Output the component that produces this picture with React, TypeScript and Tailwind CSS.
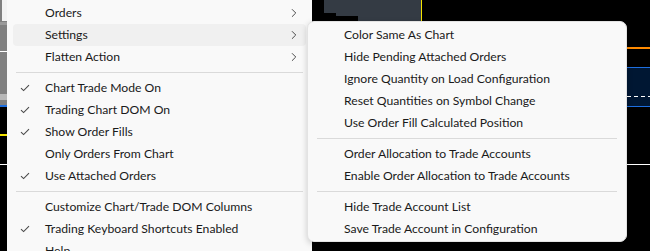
import { ChevronRight } from "lucide-react";

type Item =
  | { kind: "item"; label: string; checked?: boolean; sub?: boolean; active?: boolean }
  | { kind: "sep" };

const mainItems: Item[] = [
  { kind: "item", label: "Orders", sub: true },
  { kind: "item", label: "Settings", sub: true, active: true },
  { kind: "item", label: "Flatten Action", sub: true },
  { kind: "sep" },
  { kind: "item", label: "Chart Trade Mode On", checked: true },
  { kind: "item", label: "Trading Chart DOM On", checked: true },
  { kind: "item", label: "Show Order Fills", checked: true },
  { kind: "item", label: "Only Orders From Chart" },
  { kind: "item", label: "Use Attached Orders", checked: true },
  { kind: "sep" },
  { kind: "item", label: "Customize Chart/Trade DOM Columns" },
  { kind: "item", label: "Trading Keyboard Shortcuts Enabled", checked: true },
  { kind: "item", label: "Help" },
];

const settingsItems: Item[] = [
  { kind: "item", label: "Color Same As Chart" },
  { kind: "item", label: "Hide Pending Attached Orders" },
  { kind: "item", label: "Ignore Quantity on Load Configuration" },
  { kind: "item", label: "Reset Quantities on Symbol Change" },
  { kind: "item", label: "Use Order Fill Calculated Position" },
  { kind: "sep" },
  { kind: "item", label: "Order Allocation to Trade Accounts" },
  { kind: "item", label: "Enable Order Allocation to Trade Accounts" },
  { kind: "sep" },
  { kind: "item", label: "Hide Trade Account List" },
  { kind: "item", label: "Save Trade Account in Configuration" },
];

function Check() {
  return (
    <svg width="10" height="8" viewBox="0 0 10 8" fill="none">
      <path d="M1 4.2 L3.6 6.6 L9 1.2" stroke="#4a4a4a" strokeWidth="1.1" />
    </svg>
  );
}

function MenuRows({ items, sub }: { items: Item[]; sub?: boolean }) {
  return (
    <>
      {items.map((it, i) =>
        it.kind === "sep" ? (
          <div key={i} className="flex h-[9px] items-center px-[9px]">
            <div className="h-px w-full bg-[#dadada]" />
          </div>
        ) : (
          <div
            key={i}
            className={`mx-[6px] flex h-[22px] items-center rounded-[4px] ${
              it.active ? "bg-[#f0f0f0]" : ""
            }`}
          >
            <div className={`flex items-center pl-[7px] ${sub ? "w-[30px]" : "w-[32px]"}`}>
              {it.checked && <Check />}
            </div>
            <span className="flex-1 text-[12.2px] text-[#1a1a1a]">{it.label}</span>
            {it.sub && (
              <ChevronRight className="mr-[5px] h-[14px] w-[14px] text-[#333]" strokeWidth={1.5} />
            )}
          </div>
        )
      )}
    </>
  );
}

function ChartBackdrop() {
  return (
    <svg className="absolute inset-0" width="650" height="251" viewBox="0 0 650 251">
      <rect width="650" height="251" fill="#000" />
      {/* left toolbar strip */}
      <rect x="0" y="0" width="8" height="105" fill="#808080" />
      <rect x="2" y="0" width="5" height="21" fill="#f3f3f3" />
      <rect x="0" y="22" width="8" height="3" fill="#9a9a9a" />
      <rect x="0" y="51" width="8" height="1" fill="#ffffff" />
      <rect x="0" y="94" width="8" height="6" fill="#b8b8b8" />
      <rect x="0" y="105" width="8" height="2" fill="#1e6fe0" />
      <rect x="0" y="134" width="8" height="2" fill="#f5e400" />
      <rect x="0" y="164" width="8" height="1" fill="#ffffff" />
      {/* top chart shape */}
      <rect x="324" y="0" width="97" height="13" fill="#343b44" />
      <rect x="336" y="13" width="85" height="3" fill="#343b44" />
      <rect x="358" y="16" width="63" height="6" fill="#343b44" />
      <rect x="421" y="0" width="1" height="22" fill="#f5e400" />
      {/* right side lines */}
      <rect x="620" y="47" width="30" height="2" fill="#ff8a00" />
      <rect x="620" y="68" width="30" height="38" fill="#001733" />
      <rect x="620" y="67" width="30" height="1" fill="#1e6fe0" />
      <rect x="620" y="106" width="30" height="1" fill="#1e6fe0" />
      <line x1="620" y1="96.5" x2="650" y2="96.5" stroke="#ffffff" strokeDasharray="4 3" />
      <rect x="620" y="164" width="30" height="1" fill="#ffffff" />
    </svg>
  );
}

export default function App() {
  return (
    <div className="relative h-[251px] w-[650px] overflow-hidden bg-black font-['Lato','Noto_Sans',sans-serif]">
      <ChartBackdrop />

      <div className="absolute left-[7px] top-[-2px] h-[300px] w-[305px] bg-[#f9f9f9] pt-[4px] pb-[4px]">
        <MenuRows items={mainItems} />
      </div>

      <div className="absolute left-[307px] top-[21px] w-[320px] rounded-[7px] border border-[#e3e3e3] bg-[#f9f9f9] pt-[2px] pb-[1px] shadow-[0_2px_6px_rgba(0,0,0,0.18)]">
        <MenuRows items={settingsItems} sub />
      </div>
    </div>
  );
}
